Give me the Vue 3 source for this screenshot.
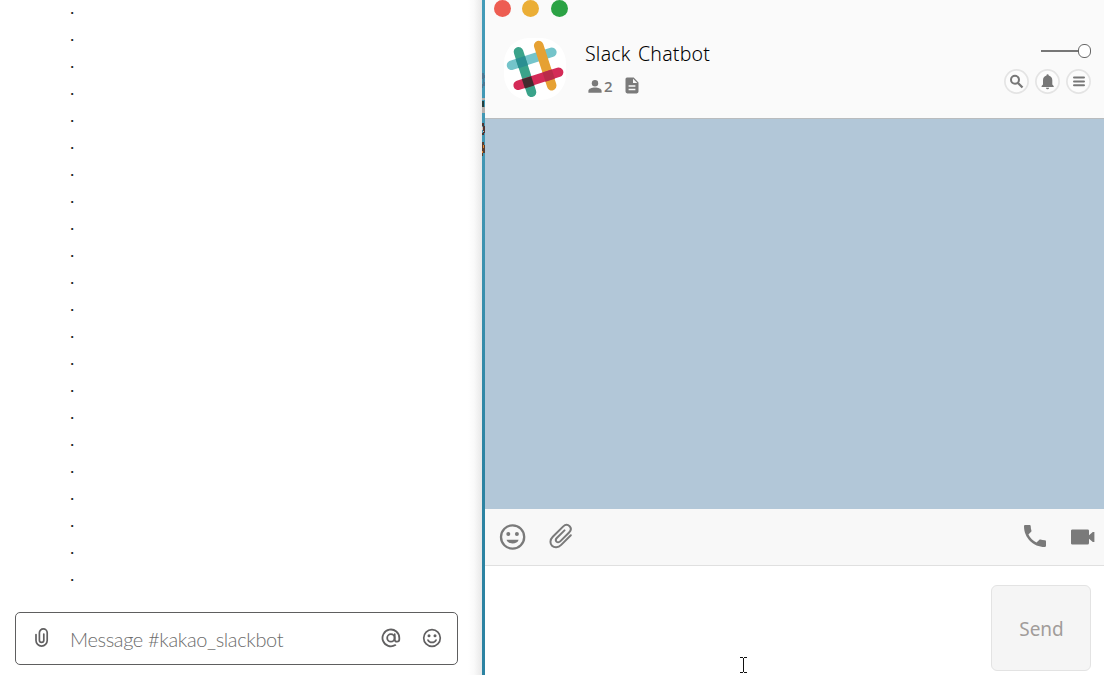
<script setup>
const dots = 22
</script>

<template>
  <main class="screen">
    <section class="channel">
      <div class="history">
        <p v-for="n in dots" :key="n" class="message">.</p>
      </div>
      <div class="composer">
        <svg class="clip" width="16" height="22" viewBox="0 0 16 22" fill="none" stroke="#616061" stroke-width="1.7" stroke-linecap="round">
          <path d="M2 7.5v6a5.6 5.6 0 0 0 11.2 0V5.8a3.9 3.9 0 0 0-7.8 0v7.4a2.2 2.2 0 0 0 4.4 0V7" />
        </svg>
        <span class="placeholder">Message #kakao_slackbot</span>
        <svg class="at" width="20" height="20" viewBox="0 0 20 20" fill="none" stroke="#616061" stroke-width="1.8" stroke-linecap="round">
          <path d="M14.3 17.1A8.4 8.4 0 1 1 18.3 10v1.2c0 3.3-4.6 3.1-4.6.2V6.2" />
          <ellipse cx="9.9" cy="9.9" rx="3.7" ry="3.7" />
        </svg>
        <svg class="smile" width="20" height="20" viewBox="0 0 20 20" fill="none" stroke="#616061" stroke-width="1.7" stroke-linecap="round">
          <circle cx="10" cy="10" r="8.3" />
          <path d="M6 12.1c1.5 3.1 6.5 3.1 8 0" />
          <g fill="#616061" stroke="none"><circle cx="7" cy="7.7" r="1.5" /><circle cx="13" cy="7.7" r="1.5" /></g>
        </svg>
      </div>
    </section>

    <div class="desktop">
      <svg width="3" height="675" viewBox="0 0 3 675" shape-rendering="crispEdges">
        <path fill="#4a7894" d="M0 73h2v2h1v3H2v4h1v4H1v2H0v-4h1v-5H0z" />
        <path fill="#b5afac" d="M0 98h3v2H0zM0 107h3v6H0z" />
        <path fill="#263f3c" d="M0 101h2v6H0z" />
        <path fill="#4f3432" d="M0 123h2v3H0zM1 126h2v7H1zM0 133h2v2H0z" />
        <path fill="#d5bcb0" d="M0 127h1v3H0zM1 131h1v1H1z" />
        <path fill="#563d31" d="M0 142h2v3h1v8H1v3H0z" />
        <path fill="#e58930" d="M1 145h1v3H1zM0 151h1v2H0z" />
      </svg>
    </div>

    <section class="chat">
      <header class="header">
        <div class="lights"><i class="red"></i><i class="yellow"></i><i class="green"></i></div>
        <div class="profile">
          <svg class="avatar" width="64" height="64" viewBox="503 37 64 64">
            <rect x="504" y="38" width="62" height="62" rx="25" fill="#fff" />
            <g fill="none" stroke-width="9.6" stroke-linecap="round">
              <path stroke="#74c4ca" d="M511.6 65.3l40.2-13" />
              <path stroke="#3aa38a" d="M518.5 51.7l13 40.5" />
              <path stroke="#e6a133" d="M538.7 45.6l13 40" />
              <path stroke="#d42b57" d="M518.2 85.3l40.4-13" />
            </g>
            <path fill="#2a8f91" d="M515.6 59l9.3-3 3 9.3-9.3 3z" />
            <path fill="#432b2f" d="M521.9 79.2l9.3-3 3 9.3-9.3 3z" />
            <path fill="#b92b49" d="M542.5 72.5l9.3-3 3 9.3-9.3 3z" />
          </svg>
          <div class="identity">
            <h1>Slack Chatbot</h1>
            <div class="meta">
              <svg width="14" height="13" viewBox="0 0 14 13" fill="#7a7a7a"><circle cx="7" cy="3.2" r="3.2" /><path d="M.4 12.7V11C.4 8.8 3.8 7.6 7 7.6s6.6 1.2 6.6 3.4v1.7z" /></svg>
              <span>2</span>
              <svg class="doc" width="14" height="17" viewBox="0 0 14 17" fill="#7a7a7a"><path fill-rule="evenodd" d="M2 .5h6.7l4.8 4.9v9.2a1.8 1.8 0 0 1-1.8 1.8H2.3a1.8 1.8 0 0 1-1.8-1.8V2A1.5 1.5 0 0 1 2 .5zM8 1.8V6h4.3zM3.6 8.3v1.5h6.8V8.3zm0 3.4v1.5h6.8v-1.5z" /></svg>
            </div>
          </div>
          <div class="controls">
            <div class="slider"><span></span><i></i></div>
            <div class="buttons">
              <svg width="25" height="25" viewBox="0 0 25 25"><circle class="ring" cx="12.5" cy="12.5" r="11.6" /><g fill="none" stroke="#777" stroke-width="2"><circle cx="11" cy="10.8" r="4" /><path stroke-width="2.3" d="M14 14l4.5 4.5" /></g></svg>
              <svg width="25" height="25" viewBox="0 0 25 25"><circle class="ring" cx="12.5" cy="12.5" r="11.6" /><path fill="#777" d="M11.5 6.5V6.3a1.1 1.1 0 0 1 2.2 0v.3c2.3.6 3.6 2.4 3.6 4.6v4.3l1.4 1.6v1H6.6v-1L8 15.5v-4.3c0-2.2 1.2-4.1 3.5-4.7zM11 18.7h3.1a1.55 1.55 0 0 1-3.1 0z" /></svg>
              <svg width="25" height="25" viewBox="0 0 25 25"><circle class="ring" cx="12.5" cy="12.5" r="11.6" /><path stroke="#777" stroke-width="2" stroke-linecap="round" d="M8 8.5h10M8 12.4h10M8 16.3h10" /></svg>
            </div>
          </div>
        </div>
      </header>
      <div class="conversation"></div>
      <div class="toolbar">
        <svg width="28" height="28" viewBox="0 0 28 28" fill="#7a7a7a"><circle cx="13.6" cy="14" r="11.6" fill="none" stroke="#7a7a7a" stroke-width="2.3" /><circle cx="9.3" cy="10.9" r="2" /><circle cx="17.9" cy="10.9" r="2" /><path d="M7.6 16.8h12c-1 5-11 5-12 0z" /></svg>
        <svg class="paperclip" width="26" height="28" viewBox="0 0 26 28" fill="none" stroke="#7a7a7a" stroke-width="2" stroke-linecap="round"><path d="M22.8 13.3l-9.6 9.6c-3.1 3.1-7 2.9-9.2.8s-2.1-6 .8-8.9L15 4.600c2.200-2.100 4.900-2.100 6.600-.4 1.600 1.700 1.500 4.300-.5 6.300l-8.900 8.900c-1.200 1.200-2.800 1.100-3.700.2-.9-1-.8-2.500.3-3.600l7.700-7.600" /></svg>
        <svg class="phone" width="22" height="22" viewBox="3 3 18 18" fill="#7a7a7a"><path d="M6.62 10.79c1.44 2.83 3.76 5.14 6.59 6.59l2.2-2.2c.27-.27.67-.36 1.02-.24 1.12.37 2.33.57 3.57.57.55 0 1 .45 1 1V20c0 .55-.45 1-1 1-9.39 0-17-7.61-17-17 0-.55.45-1 1-1h3.5c.55 0 1 .45 1 1 0 1.25.2 2.45.57 3.57.11.35.03.74-.25 1.02l-2.2 2.2z" /></svg>
        <svg class="video" width="24" height="16" viewBox="0 0 24 16" fill="#7a7a7a"><path d="M1.5.4h15A1.5 1.5 0 0 1 18 2v4.2l3.8-3.3h1.6v10.2h-1.6L18 9.8V14a1.5 1.5 0 0 1-1.5 1.5h-15A1.4 1.4 0 0 1 0 14V2A1.5 1.5 0 0 1 1.5.4z" /></svg>
      </div>
      <div class="entry">
        <svg class="caret" width="7" height="16" viewBox="0 0 7 16" shape-rendering="crispEdges"><path fill="#111" d="M0 0h3v1H0zM4 0h3v1H4zM3 1h1v14H3zM0 15h3v1H0zM4 15h3v1H4z" /></svg>
        <button>Send</button>
      </div>
    </section>
  </main>
</template>

<style>
body { overflow: hidden; }
</style>

<style scoped>
* { box-sizing: border-box; }
svg { display: block; flex: none; }
.screen { display: flex; width: 1104px; height: 675px; background: #fff; overflow: hidden; }
.channel { width: 482px; height: 675px; display: flex; flex-direction: column; background: linear-gradient(to right, #fff 468px, #fafafa 474px, #e8e8e8 482px); }
.history { height: 612px; padding-left: 70.5px; }
.message { margin: 0; height: 27px; font: 700 14px/18px Lato, sans-serif; color: #1d1c1d; }
.composer { width: 443px; height: 53px; margin-left: 15px; border: 1px solid #5e5e5f; border-radius: 5px; background: #fff; display: flex; align-items: center; padding: 0 0 2px 18px; }
.placeholder { width: 311px; margin-left: 20px; padding-top: 2px; font: 300 20px/24px Lato, sans-serif; letter-spacing: -.36px; color: #6c6c6c; white-space: nowrap; }
.smile { margin-left: 21px; }
.desktop { width: 3px; background: linear-gradient(#439bb8, #4095b2 30%, #2c83a2 70%); }
.chat { width: 619px; display: flex; flex-direction: column; }
.header { height: 119px; background: #fafafa; border-bottom: 1px solid #b9bcbe; }
.lights { height: 17px; padding-left: 8.5px; display: flex; gap: 11.6px; }
.lights i { width: 17px; height: 17px; border-radius: 50%; }
.red { background: #ed5d52; }
.yellow { background: #ebae36; }
.green { background: #2ba244; }
.profile { display: flex; height: 101px; padding-left: 18px; }
.avatar { margin-top: 20px; }
.identity { width: 300px; padding: 23px 0 0 18px; }
h1 { margin: 0; font: 300 19.5px/28px "Noto Sans", sans-serif; letter-spacing: .22px; word-spacing: 2px; color: #000; white-space: nowrap; }
.meta { display: flex; align-items: center; height: 18px; margin: 9px 0 0 3px; }
.meta span { margin-left: 2px; font: 600 15px/18px "Open Sans", sans-serif; color: #777; }
.doc { margin-left: 12px; margin-top: -1px; }
.controls { margin-left: auto; padding: 26px 13px 0 0; display: flex; flex-direction: column; align-items: flex-end; }
.slider { display: flex; align-items: center; height: 15px; }
.slider span { width: 37px; height: 2px; background: #777; }
.slider i { width: 13px; height: 14px; border: 1px solid #666; border-radius: 6px; background: #fff; }
.buttons { display: flex; gap: 6px; margin-top: 11px; }
.ring { fill: #fcfcfc; stroke: #e4e4e4; stroke-width: 1.7; }
.conversation { height: 390px; background: #b2c7d8; }
.toolbar { height: 57px; background: #f8f8f8; border-bottom: 1px solid #e0e0e0; display: flex; align-items: center; padding: 0 9px 1px 14px; }
.paperclip { margin: -1px 0 0 20.5px; }
.phone { margin: -1px 0 0 auto; }
.video { margin-left: 25px; }
.entry { height: 109px; background: #fff; display: flex; justify-content: flex-end; padding: 19px 13px 0 0; }
.caret { margin: 72px 244px 0 0; }
button { width: 100px; height: 86px; padding: 2px 0 0 1px; border: 1px solid #e3e3e3; border-radius: 6px; background: #f5f5f5; color: #a19c9a; font: 400 19px/26px "Noto Sans", sans-serif; }
</style>
